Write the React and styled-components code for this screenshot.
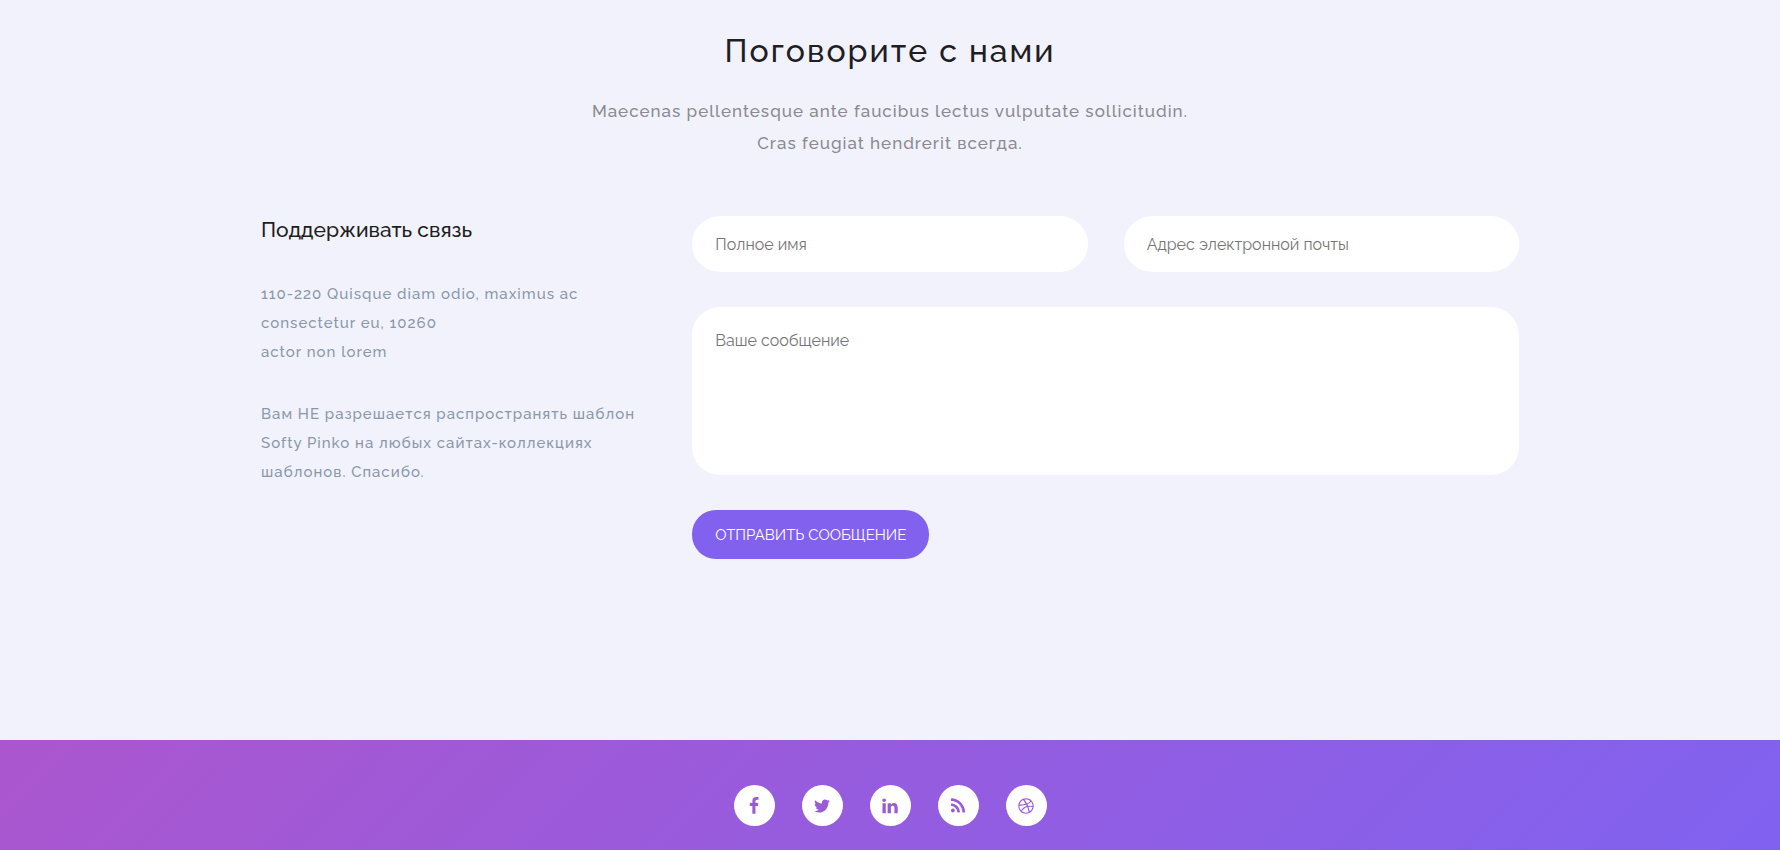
import React from 'react';
import styled, { createGlobalStyle } from 'styled-components';
import { FaDribbble } from 'react-icons/fa';

const GlobalStyle = createGlobalStyle`
  *, *::before, *::after { box-sizing: border-box; }
  body {
    margin: 0;
    background: #f2f2fc;
    font-family: Raleway, Lato, 'Noto Sans', sans-serif;
    color: #1e1e1e;
  }
  #root {
    min-height: 100vh;
    display: flex;
    flex-direction: column;
  }
`;

const Section = styled.main`
  flex: 1;
  padding: 25px 24px 180px;
`;

const Container = styled.div`
  max-width: 1258px;
  margin: 0 auto;
`;

const Heading = styled.header`
  text-align: center;
  margin-bottom: 57px;
`;

const Title = styled.h1`
  margin: 0 0 18px;
  font-size: 32px;
  line-height: 52px;
  font-weight: 500;
  letter-spacing: 2px;
  color: #1e1e24;
`;

const Lead = styled.p`
  max-width: 620px;
  margin: 0 auto;
  font-size: 17px;
  line-height: 32px;
  font-weight: 500;
  letter-spacing: 1px;
  color: #8a8a92;
`;

const Columns = styled.div`
  display: grid;
  grid-template-columns: repeat(3, minmax(0, 1fr));
  gap: 36px;
  @media (max-width: 900px) { grid-template-columns: minmax(0, 1fr); }
`;

const Info = styled.section``;

const InfoTitle = styled.h2`
  margin: 0 0 36px;
  font-size: 21px;
  line-height: 28px;
  font-weight: 500;
`;

const InfoText = styled.p`
  margin: 0 0 33px;
  font-size: 15px;
  line-height: 29px;
  font-weight: 500;
  letter-spacing: 1px;
  color: #8a98aa;
`;

const Form = styled.form`
  grid-column: span 2;
  display: grid;
  grid-template-columns: repeat(2, minmax(0, 1fr));
  gap: 35px 36px;
  align-content: start;
  @media (max-width: 900px) { grid-column: auto; }
`;

const fieldStyle = `
  display: block;
  width: 100%;
  border: 0;
  outline: none;
  border-radius: 28px;
  background: #fff;
  font-family: inherit;
  font-size: 16px;
  color: #1e1e1e;
  &::placeholder { color: #757575; opacity: 1; }
`;

const Input = styled.input`
  ${fieldStyle}
  height: 56px;
  padding: 0 23px;
`;

const Message = styled.textarea`
  ${fieldStyle}
  grid-column: 1 / -1;
  height: 168px;
  padding: 24px 23px;
  line-height: 20px;
  resize: none;
`;

const Submit = styled.button`
  justify-self: start;
  height: 49px;
  padding: 0 23px;
  border: 0;
  border-radius: 24px;
  background: #8261ee;
  color: #fff;
  font-family: inherit;
  font-size: 15px;
  white-space: nowrap;
  text-transform: uppercase;
  cursor: pointer;
`;

const Footer = styled.footer`
  padding: 45px 24px 24px;
  background: linear-gradient(135deg, #ab56ce 0%, #8062f0 100%);
`;

const SocialList = styled.ul`
  display: flex;
  justify-content: center;
  gap: 27px;
  margin: 0;
  padding: 0;
  list-style: none;
`;

const SocialLink = styled.a`
  display: flex;
  align-items: center;
  justify-content: center;
  width: 41px;
  height: 41px;
  border-radius: 50%;
  background: #fff;
  color: #9a5bd6;
`;

const Glyph = ({ d }) => (
  <svg width="18" height="18" viewBox="0 0 1792 1792" fill="currentColor" aria-hidden="true">
    <path d={d} />
  </svg>
);

const socials = [
  { name: 'Facebook', icon: <Glyph d="M1343 12v264h-157q-86 0-116 36t-30 108v189h293l-39 296h-254v759h-306v-759h-255v-296h255v-218q0-186 104-288.5t277-102.5q147 0 228 12z" /> },
  { name: 'Twitter', icon: <Glyph d="M1684 408q-67 98-162 167 1 14 1 42 0 130-38 259.5t-115.5 248.5-184.5 210.5-258 146-323 54.5q-271 0-496-145 35 4 78 4 225 0 401-138-105-2-188-64.5t-114-159.5q33 5 61 5 43 0 85-11-112-23-185.5-111.5t-73.5-205.5v-4q68 38 146 41-66-44-105-115t-39-154q0-88 44-163 121 149 294.5 238.5t371.5 99.5q-8-38-8-74 0-134 94.5-228.5t228.5-94.5q140 0 236 102 109-21 205-78-37 115-142 178 93-10 186-50z" /> },
  { name: 'LinkedIn', icon: <Glyph d="M477 625v991h-330v-991h330zm21-306q1 73-50.5 122t-135.5 49h-2q-82 0-132-49t-50-122q0-74 51.5-122.5t134.5-48.5 133 48.5 51 122.5zm1166 729v568h-329v-530q0-105-40.5-164.5t-126.5-59.5q-63 0-105.5 34.5t-63.5 85.5q-11 30-11 81v553h-329q2-399 2-647t-1-296l-1-48h329v144h-2q20-32 41-56t56.5-52 87-43.5 114.5-15.5q171 0 275 113.5t104 332.5z" /> },
  { name: 'RSS', icon: <Glyph d="M576 1344q0 80-56 136t-136 56-136-56-56-136 56-136 136-56 136 56 56 136zm512 123q2 28-17 48-18 21-47 21h-135q-25 0-43-16.5t-20-41.5q-22-229-184.5-391.5t-391.5-184.5q-25-2-41.5-20t-16.5-43v-135q0-29 21-47 17-17 43-17h5q160 13 306 80.5t259 181.5q114 113 181.5 259t80.5 306zm512 2q2 27-18 47-18 20-46 20h-143q-26 0-44.5-17.5t-19.5-42.5q-12-215-101-408.5t-231.5-336-336-231.5-408.5-102q-25-1-42.5-19.5t-17.5-43.5v-143q0-28 20-46 18-18 44-18h3q262 13 501.5 120t425.5 294q187 186 294 425.5t120 501.5z" /> },
  { name: 'Dribbble', icon: <FaDribbble size={16} aria-hidden="true" /> },
];

export default function App() {
  return (
    <>
      <GlobalStyle />
      <Section>
        <Container>
          <Heading>
            <Title>Поговорите с нами</Title>
            <Lead>
              Maecenas pellentesque ante faucibus lectus vulputate sollicitudin.
              <br />
              Cras feugiat hendrerit всегда.
            </Lead>
          </Heading>
          <Columns>
            <Info>
              <InfoTitle>Поддерживать связь</InfoTitle>
              <InfoText>
                110-220 Quisque diam odio, maximus ac
                <br />
                consectetur eu, 10260
                <br />
                actor non lorem
              </InfoText>
              <InfoText>
                Вам НЕ разрешается распространять шаблон
                Softy Pinko на любых сайтах-коллекциях
                шаблонов. Спасибо.
              </InfoText>
            </Info>
            <Form onSubmit={(e) => e.preventDefault()}>
              <Input type="text" name="name" placeholder="Полное имя" aria-label="Полное имя" />
              <Input type="email" name="email" placeholder="Адрес электронной почты" aria-label="Адрес электронной почты" />
              <Message name="message" placeholder="Ваше сообщение" aria-label="Ваше сообщение" />
              <Submit type="submit">Отправить сообщение</Submit>
            </Form>
          </Columns>
        </Container>
      </Section>
      <Footer>
        <SocialList>
          {socials.map(({ name, icon }) => (
            <li key={name}>
              <SocialLink href="#" aria-label={name}>{icon}</SocialLink>
            </li>
          ))}
        </SocialList>
      </Footer>
    </>
  );
}
